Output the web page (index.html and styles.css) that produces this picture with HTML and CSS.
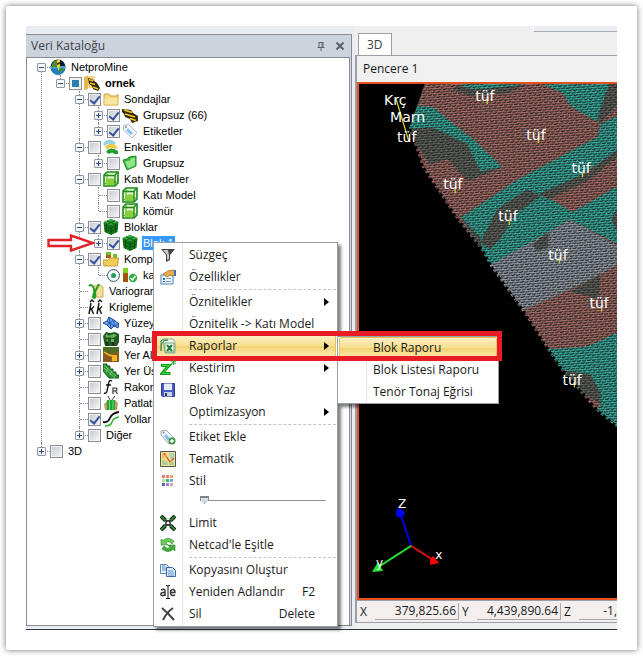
FILE: index.html
```html
<!DOCTYPE html>
<html lang="tr">
<head>
<meta charset="utf-8">
<title>NetproMine</title>
<link rel="stylesheet" href="styles.css">
</head>
<body>
<svg class="sprite" aria-hidden="true">
  <symbol id="i-globe" viewBox="0 0 16 16"><circle cx="8" cy="8" r="7.500" fill="#0b1a2a"/><path d="M1 9h14a7 7 0 0 1-14 0z" fill="#1f7fb8"/><path d="M1 7h14v2.500H1z" fill="#3fa9c9"/><path d="M2 5a7 7 0 0 1 5-4v7H2zM11 9l3 1-2 3-3-1z" fill="#4d8a35"/><path d="M7 1h3v6l-1.500 5L7 7z" fill="#f3d32b"/><path d="M7 4l3-1v2L7 6z" fill="#4b3d05"/></symbol>
  <symbol id="i-project" viewBox="0 0 16 16"><path d="M0 2l4-1.500V14l-4 1z" fill="#e8b64c"/><path d="M4 1h7v12H4z" fill="#f8d98a"/><path d="M4 3l4 1 2 2 3 2 3 5-2 3-5-2-1-3-3-2z" fill="#2d2608"/><path d="M5 4.500l4 1.500M6 8l5 1.500M9 12l5 2" stroke="#f0c51f" stroke-width="1.800"/></symbol>
  <symbol id="i-folder" viewBox="0 0 16 16"><path d="M1 14V4q0-1 1-1h4l1.500 2H14V3.500h1V14z" fill="#f3d97c" stroke="#c9a33c"/><path d="M1.500 7h13v6.500h-13z" fill="#f8e79f"/></symbol>
  <symbol id="i-drill" viewBox="0 0 16 16"><path d="M0 2l9 1 2 3 5 3v5l-6 2-2-4-5-2-1-3-2-2z" fill="#31290a"/><path d="M2 3l8 2.500M3 7l10 3M8 11.500l6 2" stroke="#f2c81e" stroke-width="1.800"/></symbol>
  <symbol id="i-tag" viewBox="0 0 16 16"><path d="M1.500 2.500l5-1 8.500 8-5 5.500-8.500-8z" fill="#f4f8fb" stroke="#a8b6c4"/><path d="M6 5.500l5 4.500-2 2-5-4.500z" fill="#7fc0ec"/><circle cx="4" cy="4" r="1" fill="#7d8c99"/></symbol>
  <symbol id="i-section" viewBox="0 0 16 16"><path d="M0 5q3-5 9-4l4 3-3 2Q5 3 2 7z" fill="#8fd4e6"/><path d="M2 8q4-5 9-3l4 4-3 1Q7 7 4 11z" fill="#ecc94a"/><path d="M3 13q3-5 8-3l4 2v3h-4q-1-3-5 0z" fill="#209a2c"/></symbol>
  <symbol id="i-greens" viewBox="0 0 16 16"><path d="M1 5l4-1 2-2 7-1v10l-9 4z" fill="#35b53e" stroke="#218c2a"/><path d="M3 6.500l5-1 1-2 4-1v8l-7 3z" fill="#8fe689"/></symbol>
  <symbol id="i-solid" viewBox="0 0 16 16"><path d="M1 4l3-3h11v11l-3 3H1z" fill="#dff5c0" stroke="#1d8a1d" stroke-width="1.600"/><path d="M4 1v10l-3 3M4 11h11" fill="none" stroke="#4aa93a"/><path d="M3 9q4-3 8-1v6H3z" fill="#86cf38"/><path d="M1 4.500h11V15M12 4l3-3" fill="none" stroke="#1d8a1d" stroke-width="1.400"/></symbol>
  <symbol id="i-block" viewBox="0 0 16 16"><path d="M8 0l7.500 3-1 10L8 16l-6.500-3-1-10z" fill="#137a1a"/><path d="M1 3l7 3 7-3-7-3z" fill="#3cb043"/><path d="M8 6.500v9M1 6l7 3.500L15 6M1.500 9.500l6.500 3 6.500-3M3.500 4.500v9M12.500 4.500v9M4 1.800l7 3M12 1.800l-7 3" fill="none" stroke="#084d0e" stroke-width=".9"/></symbol>
  <symbol id="i-comp" viewBox="0 0 16 16"><path d="M3 1h5v6H3z" fill="#b5581d"/><path d="M3 1h5v3H3zM10 3h4v4h-4z" fill="#6fbf2a"/><path d="M0 9h5l2-2h8.500l-1 8H1z" fill="#f2cb58" stroke="#c99d34"/></symbol>
  <symbol id="i-karot" viewBox="0 0 16 16"><path d="M1 1h5v5H1z" fill="#7ed321"/><path d="M1 6h5v9H1z" fill="#a4520f"/><circle cx="11" cy="11" r="4.200" fill="#38ac45"/><path d="M8.500 11l2 2 3-4" fill="none" stroke="#fff" stroke-width="1.400"/></symbol>
  <symbol id="i-vario" viewBox="0 0 16 16"><path d="M6 3l6-1 3 2v10H5z" fill="#f5df9b" stroke="#cfae52"/><path d="M1 3q3-3 5 3l1 3 4-8M7 8q-3 7-1 7t1-6" fill="none" stroke="#1fa025" stroke-width="2"/></symbol>
  <symbol id="i-krig" viewBox="0 0 16 16"><path d="M3 4L1 15M2 11l4-3.500M3.500 10l2 5M11 4L9 15M10 11l4-3.500M11.500 10l2 5M2 3l2-2 2 2M10 3l2-2 2 2" fill="none" stroke="#111" stroke-width="1.400"/></symbol>
  <symbol id="i-surface" viewBox="0 0 16 16"><path d="M0 8l4-2 2-4 5 3 5 4-1 4-4-2-3 3-4-4z" fill="#6fa4ea" stroke="#1c4ca0"/><path d="M4 6l7 5M6 2l2 12M11 5l-7 5M11 5v6l5-2" fill="none" stroke="#16429a" stroke-width=".8"/></symbol>
  <symbol id="i-fault" viewBox="0 0 16 16"><path d="M0 5l3-4 4 1 5-1 4 2v8l-2 4H2l-1-4z" fill="#1b5b20"/><path d="M2 5l2-2 2 2 2-1 3-1 3 1-2 2-3 1-3-1-2 1zM3 9l2-1v3M8 8h3v3H8z" fill="#6db05a"/><path d="M3 11h2v4H3zM9 11h2v4H9z" fill="#2d2416"/></symbol>
  <symbol id="i-under" viewBox="0 0 16 16"><path d="M0 0h16v15H0z" fill="#8a5a24"/><path d="M0 0h16v4L9 7 0 4z" fill="#4f6b24"/><path d="M1 5l5 3 4 1" fill="none" stroke="#f1c02d" stroke-width="1.400"/><path d="M9 8h5v6H9z" fill="#f1b81d"/></symbol>
  <symbol id="i-over" viewBox="0 0 16 16"><path d="M0 1h4v2h3v3h3v3h3v3h3v3H6L0 8z" fill="#2b8f35" stroke="#155c1d"/><path d="M1 5l11 10M1 2l12 11M5 5L3 9M9 8l-2 4" fill="none" stroke="#8bd98a" stroke-width=".8"/></symbol>
  <symbol id="i-fr" viewBox="0 0 16 16"><path d="M9 2Q6 0 5.500 5L4 12q-.5 3-3 2M3 6h5" fill="none" stroke="#111" stroke-width="1.400"/><path d="M10 15V9h3q2 1.500 0 3h-3m2.500 0l2 3" fill="none" stroke="#333" stroke-width="1.200"/></symbol>
  <symbol id="i-blast" viewBox="0 0 16 16"><path d="M1 9l3-3 8-1 3 3-1 7H2z" fill="#c49a68"/><path d="M4 5h8v10H4z" fill="#1da634"/><path d="M6.500 5v10M10 5v10" stroke="#67dd6b"/><path d="M7 5L5 1M9 5l3-4" stroke="#444" fill="none"/></symbol>
  <symbol id="i-road" viewBox="0 0 16 16"><path d="M0 11q5 1 7-4t9-6" fill="none" stroke="#111" stroke-width="2"/><path d="M2 15q6 0 7-4t7-5" fill="none" stroke="#28b32e" stroke-width="1.500"/></symbol>
  <symbol id="i-filter" viewBox="0 0 16 16"><path d="M1 2h14L10 8v5l-4 2V8z" fill="#444"/><path d="M3 3h5l1 5v4l-2 1V8z" fill="#c9c9c9"/></symbol>
  <symbol id="i-props" viewBox="0 0 16 16"><path d="M1 6h12v9H1z" fill="#eef5fc" stroke="#4d80b8"/><path d="M3 9h2v2H3zM3 12h2v1H3z" fill="#2a67a8"/><path d="M6 9.500h5M6 12.500h5" stroke="#6c9acb"/><path d="M3 5l5-3 6-1 2 4-3 2-3-1-3 2z" fill="#e5ad4d" stroke="#a36c1d" stroke-width=".8"/><path d="M14 1h2v6h-2z" fill="#3974b2"/></symbol>
  <symbol id="i-excel" viewBox="0 0 16 16"><path d="M3 1h10l2 3v11H5z" fill="#eef6ee" stroke="#93a893"/><path d="M1 13Q0 2 8 2H2L1 3z" fill="#bfe4bd" stroke="#3d934b"/><path d="M5 5h9v9H5z" fill="#fff" stroke="#6da274"/><path d="M7 7l5 6M12 7l-5 6" stroke="#1c7f32" stroke-width="2"/></symbol>
  <symbol id="i-z" viewBox="0 0 16 16"><path d="M1 5.500h8L2 13.500h8.500" fill="none" stroke="#159a1c" stroke-width="3"/><path d="M2 5.500h7L2.500 13.500h7" fill="none" stroke="#3ee03f"/><path d="M13.500 0v5M11 1l5 3M16 1l-5 3" stroke="#1ca323" stroke-width=".9"/></symbol>
  <symbol id="i-save" viewBox="0 0 16 16"><path d="M1.500 1.500h13v13h-12l-1-1z" fill="#4a5fc6" stroke="#2b3b8e"/><path d="M4 1.500h8V8H4z" fill="#e6ebf7"/><path d="M4 10h8v4.500H4z" fill="#ccd2de"/><path d="M5 11h2v3H5z" fill="#26347f"/></symbol>
  <symbol id="i-tagadd" viewBox="0 0 16 16"><path d="M1 2l5-1 8 8-5 6-8-9z" fill="#f4f8fb" stroke="#9cabba"/><path d="M6 5l4 4-2 3-4-5z" fill="#83bfe9"/><circle cx="3.500" cy="3.500" r="1" fill="#7d8c99"/><circle cx="12" cy="12" r="3.500" fill="#3d923f"/><path d="M12 10v4M10 12h4" stroke="#fff" stroke-width="1.300"/></symbol>
  <symbol id="i-theme" viewBox="0 0 16 16"><path d="M.5.5h15v15H.5z" fill="#f3e19b" stroke="#4d584c"/><path d="M2 2h4l1 4-5 2z" fill="#f6b75c"/><path d="M9 2h5v8l-4-2z" fill="#a3d0c0"/><path d="M2 9l5 1 1 4H2zM9 11h5v3H9z" fill="#9ece9b"/><path d="M4 2l6 9 4-4" fill="none" stroke="#d24a22" stroke-width="1.200"/><path d="M2 5h12M2 11h12M6 2v12M11 2v12" stroke="#e9d070" stroke-width=".6"/></symbol>
  <symbol id="i-style" viewBox="0 0 16 16"><path d="M2 2h3v3H2z" fill="#e6787a"/><path d="M6 2h3v3H6z" fill="#e9836a"/><path d="M10 2h3v3h-3z" fill="#eda95d"/><path d="M2 6h3v3H2z" fill="#b9dfa0"/><path d="M6 6h3v3H6z" fill="#39b963"/><path d="M10 6h3v3h-3z" fill="#69ace5"/><path d="M2 10h3v3H2z" fill="#5769a8"/><path d="M6 10h3v3H6z" fill="#a37cc7"/><path d="M10 10h3v3h-3z" fill="#dc9fc7"/></symbol>
  <symbol id="i-limit" viewBox="0 0 16 16"><path d="M1 1l4.500 4.500M15 1l-4.500 4.500M1 15l4.500-4.500M15 15l-4.500-4.500" stroke="#111" stroke-width="4"/><path d="M1 1l5 5M15 1l-5 5M1 15l5-5M15 15l-5-5" stroke="#268a2b" stroke-width="2"/><path d="M6 6h4v4H6z" fill="#fff" stroke="#111" stroke-width="1.300"/></symbol>
  <symbol id="i-sync" viewBox="0 0 16 16"><path d="M1 8V2l2 1.500Q8-1 14 4l-2 3Q8 3 6 6l2 2z" fill="#6cc85a" stroke="#2f8f2b" stroke-width=".6"/><path d="M15 8v6l-2-1.500Q8 17 2 12l2-3q4 4 6 1L8 8z" fill="#49a93c" stroke="#2f8f2b" stroke-width=".6"/></symbol>
  <symbol id="i-copy" viewBox="0 0 16 16"><path d="M.5 2.500h6l2 2v7h-8z" fill="#e8f1fb" stroke="#5b86bf"/><path d="M2 6h4M2 8h4M2 4h3" stroke="#5b86bf"/><path d="M6.500 5.500h6l3 3v6h-9z" fill="#d9e8f8" stroke="#3868a8"/><path d="M8 9h5M8 11h6M8 13h6" stroke="#6b95cc"/></symbol>
  <symbol id="i-rename" viewBox="0 0 16 16"><path d="M1 6q4-2 4 1v5M5 8.500H2.500Q.5 9 1 11q2 1.500 4-.5" fill="none" stroke="#333" stroke-width="1.500"/><path d="M10.500 8.500h4.500q0-3-2.200-3-2.300 0-2.300 3t2.300 3q1.500 0 2.200-.6" fill="none" stroke="#333" stroke-width="1.400"/><path d="M6 1.500h1.200l.8.500.8-.5H10M8 2v12M6 14.500h4" fill="none" stroke="#111"/></symbol>
  <symbol id="i-delete" viewBox="0 0 16 16"><path d="M2 2q6 5 12 12M13 2Q7 6 3 14" fill="none" stroke="#444" stroke-width="2"/></symbol>
</svg>

<main class="card">
  <div class="app">
    <section class="catalog">
      <header class="catalog-head">
        <h1>Veri Kataloğu</h1>
        <button class="tool" aria-label="Sabitle"><svg viewBox="0 0 10 10"><path d="M3 1v5M3 1.500h4M7 1v5M6 1v5M1.500 6.500h7M5 7v3" fill="none" stroke="#5b6067"/></svg></button>
        <button class="tool" aria-label="Kapat"><svg viewBox="0 0 10 10"><path d="M1.500 1.500l7 7M8.500 1.500l-7 7" stroke="#5b6067" stroke-width="2"/></svg></button>
      </header>
      <ul class="tree">
        <li>
          <div class="row"><button class="exp minus" aria-label="Daralt"></button><svg class="ico"><use href="#i-globe"/></svg><span>NetproMine</span></div>
          <ul>
            <li>
              <div class="row"><button class="exp minus" aria-label="Daralt"></button><input type="checkbox" class="partial" id="c1"><svg class="ico"><use href="#i-project"/></svg><label for="c1" class="strong">ornek</label></div>
              <ul>
                <li>
                  <div class="row"><button class="exp minus" aria-label="Daralt"></button><input type="checkbox" id="c2" checked><svg class="ico"><use href="#i-folder"/></svg><label for="c2">Sondajlar</label></div>
                  <ul>
                    <li><div class="row"><button class="exp plus" aria-label="Genişlet"></button><input type="checkbox" id="c3" checked><svg class="ico"><use href="#i-drill"/></svg><label for="c3">Grupsuz (66)</label></div></li>
                    <li><div class="row"><button class="exp plus" aria-label="Genişlet"></button><input type="checkbox" id="c4" checked><svg class="ico"><use href="#i-tag"/></svg><label for="c4">Etiketler</label></div></li>
                  </ul>
                </li>
                <li>
                  <div class="row"><button class="exp minus" aria-label="Daralt"></button><input type="checkbox" id="c5"><svg class="ico"><use href="#i-section"/></svg><label for="c5">Enkesitler</label></div>
                  <ul>
                    <li><div class="row"><button class="exp plus" aria-label="Genişlet"></button><input type="checkbox" id="c6"><svg class="ico"><use href="#i-greens"/></svg><label for="c6">Grupsuz</label></div></li>
                  </ul>
                </li>
                <li>
                  <div class="row"><button class="exp minus" aria-label="Daralt"></button><input type="checkbox" id="c7"><svg class="ico"><use href="#i-solid"/></svg><label for="c7">Katı Modeller</label></div>
                  <ul>
                    <li><div class="row leaf"><input type="checkbox" id="c8"><svg class="ico"><use href="#i-solid"/></svg><label for="c8">Katı Model</label></div></li>
                    <li><div class="row leaf"><input type="checkbox" id="c9"><svg class="ico"><use href="#i-solid"/></svg><label for="c9">kömür</label></div></li>
                  </ul>
                </li>
                <li>
                  <div class="row"><button class="exp minus" aria-label="Daralt"></button><input type="checkbox" id="c10" checked><svg class="ico"><use href="#i-block"/></svg><label for="c10">Bloklar</label></div>
                  <ul>
                    <li><div class="row"><button class="exp plus" aria-label="Genişlet"></button><input type="checkbox" id="c11" checked><svg class="ico"><use href="#i-block"/></svg><label for="c11" class="selected">Blok 1</label></div></li>
                  </ul>
                </li>
                <li>
                  <div class="row"><button class="exp minus" aria-label="Daralt"></button><input type="checkbox" id="c12" checked><svg class="ico"><use href="#i-comp"/></svg><label for="c12">Kompozitler</label></div>
                  <ul>
                    <li><div class="row leaf"><input type="radio" id="c13" checked><svg class="ico"><use href="#i-karot"/></svg><label for="c13">karot</label></div></li>
                  </ul>
                </li>
                <li><div class="row leaf"><svg class="ico"><use href="#i-vario"/></svg><span>Variogramlar</span></div></li>
                <li><div class="row leaf"><svg class="ico"><use href="#i-krig"/></svg><span>Kriglemeler</span></div></li>
                <li><div class="row"><button class="exp plus" aria-label="Genişlet"></button><input type="checkbox" id="c14"><svg class="ico"><use href="#i-surface"/></svg><label for="c14">Yüzeyler</label></div></li>
                <li><div class="row leaf"><input type="checkbox" id="c15"><svg class="ico"><use href="#i-fault"/></svg><label for="c15">Faylar</label></div></li>
                <li><div class="row"><button class="exp plus" aria-label="Genişlet"></button><input type="checkbox" id="c16"><svg class="ico"><use href="#i-under"/></svg><label for="c16">Yer Altı</label></div></li>
                <li><div class="row"><button class="exp plus" aria-label="Genişlet"></button><input type="checkbox" id="c17"><svg class="ico"><use href="#i-over"/></svg><label for="c17">Yer Üstü</label></div></li>
                <li><div class="row leaf"><input type="checkbox" id="c18"><svg class="ico"><use href="#i-fr"/></svg><label for="c18">Rakor</label></div></li>
                <li><div class="row leaf"><input type="checkbox" id="c19"><svg class="ico"><use href="#i-blast"/></svg><label for="c19">Patlatma</label></div></li>
                <li><div class="row leaf"><input type="checkbox" id="c20" checked><svg class="ico"><use href="#i-road"/></svg><label for="c20">Yollar</label></div></li>
                <li><div class="row"><button class="exp plus" aria-label="Genişlet"></button><input type="checkbox" id="c21"><label for="c21">Diğer</label></div></li>
              </ul>
            </li>
          </ul>
        </li>
        <li><div class="row"><button class="exp plus" aria-label="Genişlet"></button><input type="checkbox" id="c22"><label for="c22">3D</label></div></li>
      </ul>
    </section>

    <section class="view">
      <div class="strip"></div>
      <nav class="tabs"><button class="tab">3D</button></nav>
      <div class="pane">
        <h2>Pencere 1</h2>
        <svg class="scene" viewBox="359 85 258 513" preserveAspectRatio="xMinYMin slice" role="img" aria-label="Blok model">
          <defs>
            <pattern id="brick" width="5" height="5" patternUnits="userSpaceOnUse" patternTransform="rotate(-4)">
              <path d="M0 1h3l1.500-1M3 3.500h2M0 3.500h1l1.500-1" fill="none" stroke="#0c1212" stroke-width="1.200" opacity=".8"/>
            </pattern>
            <clipPath id="land"><path d="M425 84L416 110L409 130L422 168L455 218L482 252L490 267L521 310L547 350L562 372L597 412L617 428H700V84z"/></clipPath>
          </defs>
          <rect x="359" y="85" width="400" height="513" fill="#000"/>
          <g clip-path="url(#land)">
            <rect x="400" y="84" width="300" height="350" fill="#ab7069"/>
            <g fill="#3bb0a0">
              <path d="M457 84H525L510 90L470 90z"/>
              <path d="M540 84H609L605 102L597 123L570 107L562 94z"/>
              <path d="M417 107L433 108L447 120L475 142L502 168L480 173L470 152L437 132L408 130z"/>
              <path d="M617 117L600 125L597 138L518 180L461 218L482 253L490 267L570 220L617 245V187L572 213L547 198L617 152z"/>
              <path d="M545 350L587 347L617 333V430H600z"/>
            </g>
            <g fill="#65675f">
              <path d="M408 130L432 128L467 145L480 172L502 168L468 182L458 172L448 160L430 165L418 148z"/>
              <path d="M497 210L527 190L540 197L515 215L500 240L490 250L480 243z"/>
              <path d="M461 218L480 238L482 251z"/>
              <path d="M538 195L587 173L617 150V157L587 182L548 200z"/>
              <path d="M609 84H617V105L600 125L597 118z"/>
              <path d="M452 90L458 86L475 91L528 85L508 94L470 97z"/>
              <path d="M617 208L611 220L617 234z"/>
            </g>
            <path d="M570 220L617 247V265L600 275L565 292L521 312L488 267z" fill="#989fa8"/>
            <g fill="#65675f">
              <path d="M532 245L548 233V248L537 252z"/>
              <path d="M570 292L600 275L598 300L590 297z"/>
              <path d="M560 370L590 375L600 393V405L580 393z"/>
            </g>
            <path d="M578 392L600 404L597 412z" fill="#ab7069"/>
            <rect x="400" y="84" width="300" height="350" fill="url(#brick)"/>
          </g>
          <path d="M409 130L422 168L455 218L482 252L490 267L521 310L547 350L562 372L597 412L617 428" fill="none" stroke="#000" stroke-width="4" stroke-dasharray="3 3"/>
          <path d="M396 100L409 143M487 101v4M538 140v4M582 174v4M455 190v4M509 222v4M559 260v4M601 308v4M574 384v4" fill="none" stroke="#d9cf2c" stroke-width="1.300"/>
          <g class="rock">
            <text x="384" y="106">Krç</text><text x="390" y="123">Marn</text><text x="397" y="143">tüf</text>
            <text x="475" y="102">tüf</text><text x="526" y="141">tüf</text><text x="571" y="174">tüf</text>
            <text x="443" y="190">tüf</text><text x="498" y="222">tüf</text><text x="548" y="261">tüf</text>
            <text x="589" y="309">tüf</text><text x="562" y="385">tüf</text>
          </g>
          <path d="M411 546L401 516" stroke="#0000e0" stroke-width="2"/><path d="M396 516v-5l4-3 4 4 1 3-5 3z" fill="#00f"/>
          <path d="M411 546L433 560" stroke="#d01010" stroke-width="2"/><path d="M433 556l6 7-9 2v-6z" fill="#f00"/>
          <path d="M411 546L380 566" stroke="#20d830" stroke-width="2"/><path d="M372 572l6-10 5 9z" fill="#1ee62c"/>
          <g class="axis"><text x="398" y="508">Z</text><text x="435" y="559">x</text><text x="376" y="567">y</text></g>
        </svg>
        <dl class="coords">
          <dt>X</dt><dd>379,825.66</dd>
          <dt>Y</dt><dd>4,439,890.64</dd>
          <dt>Z</dt><dd class="last">-1,</dd>
        </dl>
      </div>
    </section>

    <svg class="pointer" viewBox="0 0 48 18" aria-hidden="true"><path d="M1.500 6H24V1.500L46 9 24 16.500V12H1.500z" fill="#fff" stroke="#e02226" stroke-width="2.400"/></svg>

    <ul class="menu context">
      <li><button><svg class="ico"><use href="#i-filter"/></svg><span>Süzgeç</span></button></li>
      <li><button><svg class="ico"><use href="#i-props"/></svg><span>Özellikler</span></button></li>
      <li class="sep"></li>
      <li><button class="more"><span>Öznitelikler</span></button></li>
      <li><button><span>Öznitelik -&gt; Katı Model</span></button></li>
      <li class="open">
        <button class="more hot"><svg class="ico"><use href="#i-excel"/></svg><span>Raporlar</span></button>
        <ul class="menu submenu">
          <li><button class="hot"><span>Blok Raporu</span></button></li>
          <li><button><span>Blok Listesi Raporu</span></button></li>
          <li><button><span>Tenör Tonaj Eğrisi</span></button></li>
        </ul>
        <div class="marker"></div>
      </li>
      <li><button class="more"><svg class="ico"><use href="#i-z"/></svg><span>Kestirim</span></button></li>
      <li><button><svg class="ico"><use href="#i-save"/></svg><span>Blok Yaz</span></button></li>
      <li><button class="more"><span>Optimizasyon</span></button></li>
      <li class="sep"></li>
      <li><button><svg class="ico"><use href="#i-tagadd"/></svg><span>Etiket Ekle</span></button></li>
      <li><button><svg class="ico"><use href="#i-theme"/></svg><span>Tematik</span></button></li>
      <li><button><svg class="ico"><use href="#i-style"/></svg><span>Stil</span></button></li>
      <li class="slide"><input type="range" min="0" max="100" value="0" aria-label="Stil"></li>
      <li><button><svg class="ico"><use href="#i-limit"/></svg><span>Limit</span></button></li>
      <li><button><svg class="ico"><use href="#i-sync"/></svg><span>Netcad'le Eşitle</span></button></li>
      <li class="sep"></li>
      <li><button><svg class="ico"><use href="#i-copy"/></svg><span>Kopyasını Oluştur</span></button></li>
      <li><button><svg class="ico"><use href="#i-rename"/></svg><span>Yeniden Adlandır</span><kbd>F2</kbd></button></li>
      <li><button><svg class="ico"><use href="#i-delete"/></svg><span>Sil</span><kbd>Delete</kbd></button></li>
    </ul>
  </div>
</main>
</body>
</html>
```
FILE: styles.css
```css
* { box-sizing: border-box; }
body { margin: 0; padding: 6px; background: #fff; font-family: "Open Sans", "Noto Sans", sans-serif; font-size: 12px; color: #1a1a1a; }
ul, dl, dd, h1, h2 { margin: 0; padding: 0; list-style: none; font-size: inherit; font-weight: normal; }
button { border: 0; padding: 0; background: none; color: inherit; font: inherit; text-align: left; }
input { margin: 0; }
.sprite { display: none; }
.ico { flex: none; width: 16px; height: 16px; }

.card { padding: 20px; background: #fff; border-radius: 2px; box-shadow: 0 0 6px rgba(0, 0, 0, .55); }
.app { position: relative; display: grid; grid-template-columns: 326px minmax(0, 1fr); column-gap: 3px; background: #e9ecf1; border-bottom: 1px solid #2c3540; }

/* Catalog panel */
.catalog { display: flex; flex-direction: column; margin: 8px 0 3px; padding-right: 1px; border: 1px solid #858b94; border-left: 0; background: #cdd3dc; }
.catalog-head { display: flex; align-items: center; gap: 9px; height: 22px; padding: 0 5px; color: #3c4148; }
.catalog-head h1 { flex: 1; font-size: 12px; line-height: 20px; }
.tool { width: 10px; height: 10px; }
.tool svg { display: block; width: 10px; height: 10px; }
.tree { flex: 1; padding: 1px 0 0 10px; background: #fff; border: 1px solid #858b94; border-bottom: 0; font: 11px/16px "Liberation Sans", sans-serif; color: #000; }
.tree ul { margin-left: 19px; }
.tree li { position: relative; }
.tree li::before { content: ""; position: absolute; left: 4px; top: 0; bottom: 0; border-left: 1px dotted #8a8a8a; }
.tree > li:first-child::before { top: 8px; }
.tree li:last-child::before { bottom: auto; height: 8px; }
.row { position: relative; display: flex; align-items: center; height: 16px; white-space: nowrap; }
.row::before { content: ""; position: absolute; left: 5px; top: 8px; width: 8px; border-top: 1px dotted #8a8a8a; }
.row.leaf { padding-left: 13px; }
.exp { position: relative; flex: none; width: 9px; height: 9px; margin-right: 4px; border: 1px solid #8d97a5; border-radius: 1px; background: #f6f7f9; }
.exp::before { content: ""; position: absolute; left: 1px; top: 3px; width: 5px; height: 1px; background: #2c4a8a; }
.exp.plus::after { content: ""; position: absolute; left: 3px; top: 1px; width: 1px; height: 5px; background: #2c4a8a; }
.row input { appearance: none; position: relative; flex: none; width: 13px; height: 13px; border: 1px solid #8b8f94; background: linear-gradient(135deg, #c3c9d0, #f6f6f6); box-shadow: inset 0 0 0 1px #f4f4f4; }
.row input[type="checkbox"]:checked::after { content: ""; position: absolute; left: 3px; top: 0; width: 4px; height: 8px; border: solid #35509c; border-width: 0 2px 2px 0; transform: rotate(38deg); }
.row input.partial { background: #2a7fae; box-shadow: inset 0 0 0 2px #f4f4f4; }
.row input[type="radio"] { border-radius: 50%; border-color: #3b5b76; background: #f4f8f6; }
.row input[type="radio"]::after { content: ""; position: absolute; left: 3px; top: 3px; width: 5px; height: 5px; border-radius: 50%; background: #239a5c; }
.row input + .ico { margin-left: 2px; }
.row label, .row span { margin-left: 4px; padding: 0 1px; }
.row .strong { font-weight: bold; }
.row .selected { background: #3399ff; color: #fff; line-height: 14px; }

/* 3D view */
.view { display: flex; flex-direction: column; padding: 0 0 6px; background: #efefef; }
.strip { align-self: flex-end; width: 84px; height: 6px; margin-bottom: 1px; border-left: 1px solid #fff; border-bottom: 1px solid #a9aeb5; background: #e9ecf1; }
.tabs { display: flex; padding-left: 3px; }
.tab { height: 22px; padding: 0 8px; background: #fff; border: 1px solid #9a9fa6; border-bottom: 0; color: #3a3f45; }
.pane { border: 2px solid #9a9fa6; border-width: 1px 0 1px 2px; background: #f0f0f0; }
.pane h2 { padding: 0 6px; font-size: 12px; line-height: 26px; }
.scene { display: block; width: 100%; height: 518px; border: solid #e2511f; border-width: 2px 0 2px 2px; background: #000; }
.rock, .axis { fill: #fff; font-family: "DejaVu Sans", sans-serif; font-size: 14px; }
.axis { font-size: 12px; }
.coords { display: grid; grid-template-columns: 12px 84px 12px 84px 12px 1fr; column-gap: 3px; height: 22px; align-items: center; padding-left: 3px; border-top: 1px solid #9a9fa6; background: #f3efee; }
.coords dd { height: 17px; padding-right: 2px; border: solid #a9a9a9; border-width: 0 1px 1px 0; text-align: right; line-height: 16px; }
.coords .last { padding-right: 0; border-right: 0; }

.pointer { position: absolute; left: 21px; top: 208px; width: 48px; height: 18px; }

/* Menus */
.menu { position: absolute; padding: 1px; border: 1px solid #9a9fa6; background: linear-gradient(90deg, #fff 28px, #e2e4e7 28px, #e2e4e7 29px, #fff 29px); box-shadow: 3px 3px 3px rgba(0, 0, 0, .5); color: #1a1a1a; }
.context { left: 127px; top: 216px; width: 185px; }
.submenu { left: 182px; top: 1px; width: 162px; padding: 0 1px; }
.menu button { display: flex; align-items: center; width: 100%; height: 22px; padding: 0 20px 1px 33px; white-space: nowrap; border: 1px solid transparent; border-radius: 2px; }
.menu button .ico { margin: 0 13px 0 -29px; }
.menu button span { flex: 1; }
.menu kbd { font: inherit; }
.menu .hot { border-color: #e8c163; background: linear-gradient(#fcefc4, #f7df8c 50%, #f2d272 51%, #fbeab0); }
.menu .more { position: relative; padding-right: 6px; }
.more::after { content: ""; border: solid transparent; border-width: 4px 0 4px 5px; border-left-color: #000; }
.sep { height: 3px; margin-left: 34px; padding-top: 1px; }
.sep::after { content: ""; display: block; border-top: 1px dashed #c5c5c5; }
.open { position: relative; }
.marker { position: absolute; left: -3px; top: -4px; width: 350px; height: 30px; border: 5px solid #e91c24; pointer-events: none; }
.slide { display: flex; height: 20px; padding: 0 10px 0 45px; }
.slide input { appearance: none; width: 100%; height: 16px; background: linear-gradient(#8e949b, #8e949b) center / 100% 1px no-repeat; }
.slide input::-webkit-slider-thumb { appearance: none; width: 9px; height: 8px; background: linear-gradient(#7e858d 1px, #e3e5e8 1px, #c8ccd1); border: 1px solid #7e858d; clip-path: polygon(0 0, 100% 0, 100% 50%, 50% 100%, 0 50%); }
```
